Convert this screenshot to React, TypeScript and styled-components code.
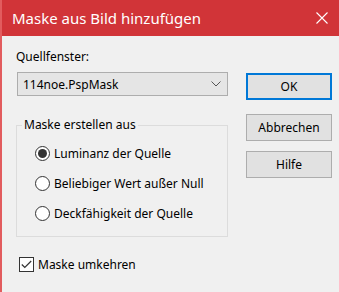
import React from "react";
import styled, { createGlobalStyle } from "styled-components";

const GlobalStyle = createGlobalStyle`
  html, body {
    margin: 0;
    padding: 0;
    background: #f0f0f0;
  }
  * {
    box-sizing: border-box;
  }
`;

//Window
const Window = styled.div`
  width: 339px;
  height: 292px;
  background: #f0f0f0;
  border-left: 2px solid #e25c5e;
  display: flex;
  flex-direction: column;
  font-family: "Noto Sans", "Open Sans", sans-serif;
  font-size: 12px;
  color: #000;
  overflow: hidden;
`;

//TitleBar
const TitleBar = styled.div`
  height: 36px;
  flex-shrink: 0;
  background: #d13438;
  color: #fff;
  display: flex;
  align-items: center;
  justify-content: space-between;
  padding: 0 11px 0 10px;
  font-size: 15px;
`;

const CloseButton = styled.div`
  width: 12px;
  height: 12px;
  display: flex;
`;

//Content
const Body = styled.div`
  display: flex;
  flex-direction: column;
  padding: 0 0 0 14px;
`;

const MainRow = styled.div`
  display: flex;
`;

const LeftColumn = styled.div`
  width: 212px;
  padding-top: 13px;
  display: flex;
  flex-direction: column;
`;

const RightColumn = styled.div`
  margin-left: auto;
  margin-right: 7px;
  padding-top: 37px;
  display: flex;
  flex-direction: column;
`;

const Label = styled.div`
  line-height: 16px;
`;

const ComboBox = styled.div`
  margin: 7px 0 0 1px;
  height: 24px;
  background: #e5e5e5;
  border: 1px solid #adadad;
  display: flex;
  align-items: center;
  justify-content: space-between;
  padding: 0 6px 0 5px;
`;

//GroupBox
const GroupBox = styled.fieldset`
  margin: 21px 0 0 0;
  padding: 12px 0 15px 0;
  border: 1px solid #dcdcdc;
  min-width: 0;
`;

const Legend = styled.legend`
  margin-left: 5px;
  padding: 0 2px;
  line-height: 16px;
`;

const RadioList = styled.div`
  display: flex;
  flex-direction: column;
  gap: 14px;
  padding-left: 18px;
`;

const OptionRow = styled.label`
  display: flex;
  align-items: center;
  height: 16px;
  gap: 4px;
`;

const RadioCircle = styled.span<{ $checked: boolean }>`
  width: 15px;
  height: 15px;
  border-radius: 50%;
  border: 1px solid #333;
  background: #fff;
  display: flex;
  align-items: center;
  justify-content: center;
  flex-shrink: 0;
  &::after {
    content: "";
    width: 9px;
    height: 9px;
    border-radius: 50%;
    background: ${props => (props.$checked ? "#333" : "transparent")};
  }
`;

const CheckBox = styled.span`
  width: 15px;
  height: 15px;
  border: 1px solid #333;
  background: #fff;
  display: flex;
  align-items: center;
  justify-content: center;
  flex-shrink: 0;
`;

const CheckRow = styled(OptionRow)`
  margin: 19px 0 0 3px;
`;

//Buttons
const DialogButton = styled.button<{ $default?: boolean; $spaceAfter?: number }>`
  width: 86px;
  height: 27px;
  margin: 0 0 ${props => props.$spaceAfter ?? 0}px 0;
  padding: 0;
  background: #e1e1e1;
  border: ${props => (props.$default ? "2px solid #0078d7" : "1px solid #adadad")};
  font-family: inherit;
  font-size: 12px;
  color: #000;
  cursor: default;
`;

const radios = [
  { label: "Luminanz der Quelle", checked: true },
  { label: "Beliebiger Wert außer Null", checked: false },
  { label: "Deckfähigkeit der Quelle", checked: false },
];

export default function App() {
  return (
    <>
      <GlobalStyle />
      <Window>
        <TitleBar>
          <span>Maske aus Bild hinzufügen</span>
          <CloseButton>
            <svg width="12" height="12" viewBox="0 0 12 12">
              <path d="M0.5 0.5 L11.5 11.5 M11.5 0.5 L0.5 11.5" stroke="#fff" strokeWidth="1.1" fill="none" />
            </svg>
          </CloseButton>
        </TitleBar>
        <Body>
          <MainRow>
            <LeftColumn>
              <Label>Quellfenster:</Label>
              <ComboBox>
                <span>114noe.PspMask</span>
                <svg width="10" height="6" viewBox="0 0 10 6">
                  <path d="M0.5 0.5 L5 5 L9.5 0.5" stroke="#555" strokeWidth="1" fill="none" />
                </svg>
              </ComboBox>
              <GroupBox>
                <Legend>Maske erstellen aus</Legend>
                <RadioList>
                  {radios.map(r => (
                    <OptionRow key={r.label}>
                      <RadioCircle $checked={r.checked} />
                      <span>{r.label}</span>
                    </OptionRow>
                  ))}
                </RadioList>
              </GroupBox>
            </LeftColumn>
            <RightColumn>
              <DialogButton $default $spaceAfter={14}>OK</DialogButton>
              <DialogButton $spaceAfter={10}>Abbrechen</DialogButton>
              <DialogButton>Hilfe</DialogButton>
            </RightColumn>
          </MainRow>
          <CheckRow>
            <CheckBox>
              <svg width="11" height="9" viewBox="0 0 11 9">
                <path d="M0.8 4.5 L3.8 7.5 L10.2 1" stroke="#333" strokeWidth="1.2" fill="none" />
              </svg>
            </CheckBox>
            <span>Maske umkehren</span>
          </CheckRow>
        </Body>
      </Window>
    </>
  );
}
